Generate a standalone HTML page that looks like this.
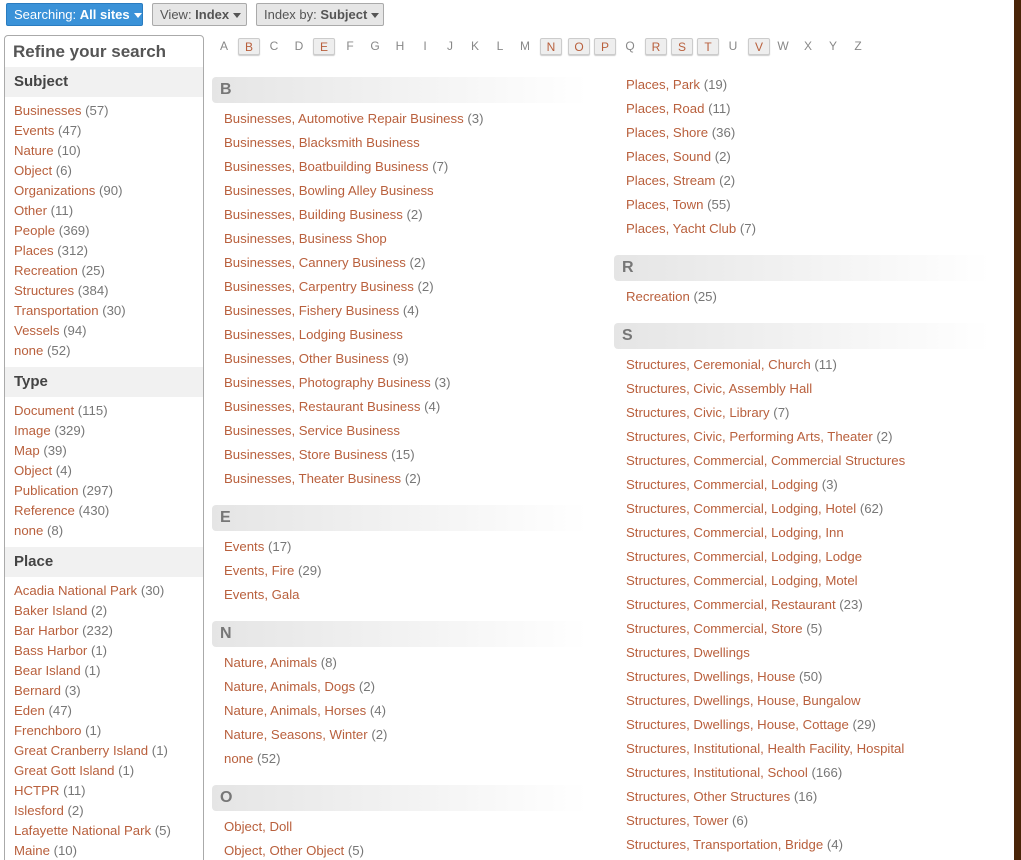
<!DOCTYPE html>
<html style="width:1021px;height:860px;overflow:hidden"><head><meta charset="utf-8"><style>
*{margin:0;padding:0;box-sizing:border-box}
body{width:1021px;height:860px;overflow:hidden;background:#fff;font-family:"Liberation Sans",Arial,sans-serif;font-size:13.2px;color:#777;position:relative}
a{color:#b9603d;text-decoration:none}
.btn{position:absolute;top:3px;height:23px;border:1px solid #aaa;border-radius:2px;background:#e6e6e6;color:#555;font-size:13px;line-height:21px;padding-left:7px}
.btn b{color:#555}
.car{display:inline-block;width:0;height:0;border-left:4px solid transparent;border-right:4px solid transparent;border-top:5px solid #555;vertical-align:middle;margin-left:4px}
#sb{position:absolute;left:4px;top:35px;width:200px;height:840px;border:1px solid #aaa;border-radius:4px}
#sb h1{font-size:17px;color:#555;padding:6px 0 0 8px;height:31px}
#sb h2{font-size:15px;color:#444;background:#f1f1f1;height:30px;line-height:30px;padding-left:9px;margin-top:6px}
#sb h2.f{margin-top:0}
#sb ul{list-style:none;padding:4px 0 0 9px}
#sb li{height:20px;line-height:20px}
#letters{position:absolute;left:212px;top:38px;height:18px}
#letters span{position:absolute;top:0;width:22px;height:17px;line-height:17px;text-align:center;color:#888;font-size:12px}
#letters span.on{background:#eee;border:1px solid #ccc;border-radius:2px;color:#b9603d;box-shadow:0 1px 1px #ccc}
.col{position:absolute;width:376px}
.col h3{height:26px;line-height:26px;font-size:16px;color:#777;padding-left:8px;border-radius:4px 0 0 4px;background:linear-gradient(to right,#e5e5e5,#fff);margin-top:14px}
.col h3.f{margin-top:0}
.col ul{list-style:none;padding:4px 0 0 12px}
.col li{height:24px;line-height:24px}
#strip{position:absolute;left:1014px;top:0;width:7px;height:860px;background:#4a2508}
</style></head><body>
<div class="btn" style="left:6px;width:137px;background:#3a92d8;border-color:#2a7cc0;color:#fff">Searching: <b style="color:#fff">All sites</b><span class="car" style="border-top-color:#fff"></span></div>
<div class="btn" style="left:152px;width:95px">View: <b>Index</b><span class="car"></span></div>
<div class="btn" style="left:256px;width:128px">Index by: <b>Subject</b><span class="car"></span></div>

<div id="sb">
<h1>Refine your search</h1>
<h2 class="f">Subject</h2>
<ul><li><a>Businesses</a> (57)</li><li><a>Events</a> (47)</li><li><a>Nature</a> (10)</li><li><a>Object</a> (6)</li><li><a>Organizations</a> (90)</li><li><a>Other</a> (11)</li><li><a>People</a> (369)</li><li><a>Places</a> (312)</li><li><a>Recreation</a> (25)</li><li><a>Structures</a> (384)</li><li><a>Transportation</a> (30)</li><li><a>Vessels</a> (94)</li><li><a>none</a> (52)</li></ul>
<h2>Type</h2>
<ul><li><a>Document</a> (115)</li><li><a>Image</a> (329)</li><li><a>Map</a> (39)</li><li><a>Object</a> (4)</li><li><a>Publication</a> (297)</li><li><a>Reference</a> (430)</li><li><a>none</a> (8)</li></ul>
<h2>Place</h2>
<ul><li><a>Acadia National Park</a> (30)</li><li><a>Baker Island</a> (2)</li><li><a>Bar Harbor</a> (232)</li><li><a>Bass Harbor</a> (1)</li><li><a>Bear Island</a> (1)</li><li><a>Bernard</a> (3)</li><li><a>Eden</a> (47)</li><li><a>Frenchboro</a> (1)</li><li><a>Great Cranberry Island</a> (1)</li><li><a>Great Gott Island</a> (1)</li><li><a>HCTPR</a> (11)</li><li><a>Islesford</a> (2)</li><li><a>Lafayette National Park</a> (5)</li><li><a>Maine</a> (10)</li></ul>
</div>

<div id="letters">
<span style="left:1px">A</span><span class="on" style="left:26px">B</span><span style="left:51px">C</span><span style="left:76px">D</span><span class="on" style="left:101px">E</span><span style="left:127px">F</span><span style="left:152px">G</span><span style="left:177px">H</span><span style="left:202px">I</span><span style="left:227px">J</span><span style="left:252px">K</span><span style="left:277px">L</span><span style="left:302px">M</span><span class="on" style="left:328px">N</span><span class="on" style="left:356px">O</span><span class="on" style="left:382px">P</span><span style="left:407px">Q</span><span class="on" style="left:433px">R</span><span class="on" style="left:459px">S</span><span class="on" style="left:485px">T</span><span style="left:510px">U</span><span class="on" style="left:536px">V</span><span style="left:560px">W</span><span style="left:585px">X</span><span style="left:610px">Y</span><span style="left:635px">Z</span>
</div>

<div class="col" style="left:212px;top:77px">
<h3 class="f">B</h3>
<ul><li><a>Businesses, Automotive Repair Business</a> (3)</li><li><a>Businesses, Blacksmith Business</a></li><li><a>Businesses, Boatbuilding Business</a> (7)</li><li><a>Businesses, Bowling Alley Business</a></li><li><a>Businesses, Building Business</a> (2)</li><li><a>Businesses, Business Shop</a></li><li><a>Businesses, Cannery Business</a> (2)</li><li><a>Businesses, Carpentry Business</a> (2)</li><li><a>Businesses, Fishery Business</a> (4)</li><li><a>Businesses, Lodging Business</a></li><li><a>Businesses, Other Business</a> (9)</li><li><a>Businesses, Photography Business</a> (3)</li><li><a>Businesses, Restaurant Business</a> (4)</li><li><a>Businesses, Service Business</a></li><li><a>Businesses, Store Business</a> (15)</li><li><a>Businesses, Theater Business</a> (2)</li></ul>
<h3>E</h3>
<ul><li><a>Events</a> (17)</li><li><a>Events, Fire</a> (29)</li><li><a>Events, Gala</a></li></ul>
<h3>N</h3>
<ul><li><a>Nature, Animals</a> (8)</li><li><a>Nature, Animals, Dogs</a> (2)</li><li><a>Nature, Animals, Horses</a> (4)</li><li><a>Nature, Seasons, Winter</a> (2)</li><li><a>none</a> (52)</li></ul>
<h3>O</h3>
<ul><li><a>Object, Doll</a></li><li><a>Object, Other Object</a> (5)</li></ul>
</div>

<div class="col" style="left:614px;top:69px">
<ul style="padding-top:4px"><li><a>Places, Park</a> (19)</li><li><a>Places, Road</a> (11)</li><li><a>Places, Shore</a> (36)</li><li><a>Places, Sound</a> (2)</li><li><a>Places, Stream</a> (2)</li><li><a>Places, Town</a> (55)</li><li><a>Places, Yacht Club</a> (7)</li></ul>
<h3>R</h3>
<ul><li><a>Recreation</a> (25)</li></ul>
<h3>S</h3>
<ul><li><a>Structures, Ceremonial, Church</a> (11)</li><li><a>Structures, Civic, Assembly Hall</a></li><li><a>Structures, Civic, Library</a> (7)</li><li><a>Structures, Civic, Performing Arts, Theater</a> (2)</li><li><a>Structures, Commercial, Commercial Structures</a></li><li><a>Structures, Commercial, Lodging</a> (3)</li><li><a>Structures, Commercial, Lodging, Hotel</a> (62)</li><li><a>Structures, Commercial, Lodging, Inn</a></li><li><a>Structures, Commercial, Lodging, Lodge</a></li><li><a>Structures, Commercial, Lodging, Motel</a></li><li><a>Structures, Commercial, Restaurant</a> (23)</li><li><a>Structures, Commercial, Store</a> (5)</li><li><a>Structures, Dwellings</a></li><li><a>Structures, Dwellings, House</a> (50)</li><li><a>Structures, Dwellings, House, Bungalow</a></li><li><a>Structures, Dwellings, House, Cottage</a> (29)</li><li><a>Structures, Institutional, Health Facility, Hospital</a></li><li><a>Structures, Institutional, School</a> (166)</li><li><a>Structures, Other Structures</a> (16)</li><li><a>Structures, Tower</a> (6)</li><li><a>Structures, Transportation, Bridge</a> (4)</li></ul>
</div>
<div id="strip"></div>
</body></html>
